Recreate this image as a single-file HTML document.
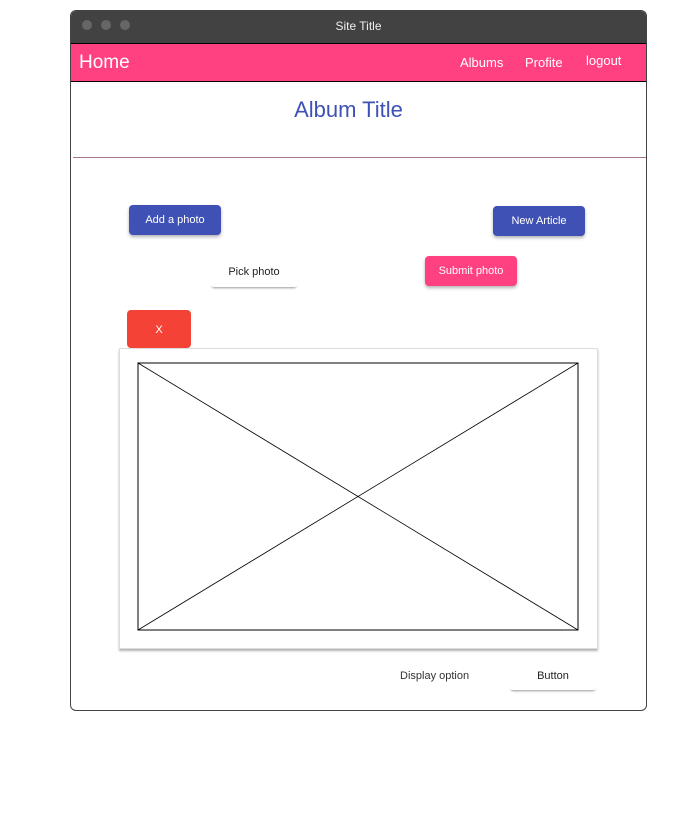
<!DOCTYPE html>
<html><head><style>
body{margin:0;width:696px;height:820px;background:#fff;position:relative;font-family:"Liberation Sans",sans-serif;overflow:hidden}
.a{position:absolute}
.win{left:70px;top:10px;width:575px;height:699px;border:1px solid #444;border-radius:6px;overflow:hidden}
.tb{left:0;top:0;width:575px;height:32px;background:#424242;color:#eee;font-size:12px;text-align:center;line-height:31px}
.dot{top:9px;width:10px;height:10px;border-radius:50%;background:#666}
.nav{left:0;top:32px;width:575px;height:37px;background:#ff4081;border-top:1px solid #000;border-bottom:1px solid #000;color:#fff}
.btn{border-radius:4px;color:#fff;font-size:11px;text-align:center;box-shadow:0 2px 3px rgba(0,0,0,.3)}
.w{box-shadow:0 3px 2px -2px rgba(0,0,0,.4)}
</style></head><body>
<div class="a win">
 <div class="a tb">Site Title
  <div class="a dot" style="left:11px"></div><div class="a dot" style="left:30px"></div><div class="a dot" style="left:49px"></div>
 </div>
 <div class="a nav">
  <div class="a" style="left:8px;top:8px;font-size:19px">Home</div>
  <div class="a" style="left:389px;top:11px;font-size:13px">Albums</div>
  <div class="a" style="left:454px;top:11px;font-size:13px">Profite</div>
  <div class="a" style="left:515px;top:9px;font-size:13px">logout</div>
 </div>
 <div class="a" style="left:-10px;width:575px;top:86px;text-align:center;color:#3f51b5;font-size:22px">Album Title</div>
 <div class="a" style="left:2px;top:146px;width:573px;height:1px;background:#a87585"></div>
</div>
<div class="a btn" style="left:129px;top:205px;width:92px;height:30px;line-height:31px;background:#3f51b5">Add a photo</div>
<div class="a btn" style="left:493px;top:206px;width:92px;height:30px;line-height:31px;background:#3f51b5">New Article</div>
<div class="a btn w" style="left:210px;top:257px;width:88px;height:30px;line-height:31px;background:#fff;color:#222">Pick photo</div>
<div class="a btn" style="left:425px;top:256px;width:92px;height:30px;line-height:31px;background:#ff4081">Submit photo</div>
<div class="a btn" style="left:127px;top:310px;width:64px;height:38px;line-height:40px;background:#f44336;box-shadow:none">X</div>
<div class="a" style="left:119px;top:348px;width:477px;height:299px;border:1px solid #ddd;box-shadow:0 2px 2px rgba(0,0,0,.3);background:#fff"></div>
<svg class="a" style="left:137px;top:362px" width="442" height="269"><rect x="1" y="1" width="440" height="267" fill="none" stroke="#000"/><line x1="1" y1="1" x2="441" y2="268" stroke="#000" stroke-width=".8"/><line x1="441" y1="1" x2="1" y2="268" stroke="#000" stroke-width=".8"/></svg>
<div class="a" style="left:400px;top:670px;font-size:11px;color:#333">Display option</div>
<div class="a btn w" style="left:509px;top:662px;width:88px;height:28px;line-height:29px;background:#fff;color:#222">Button</div>
</body></html>
